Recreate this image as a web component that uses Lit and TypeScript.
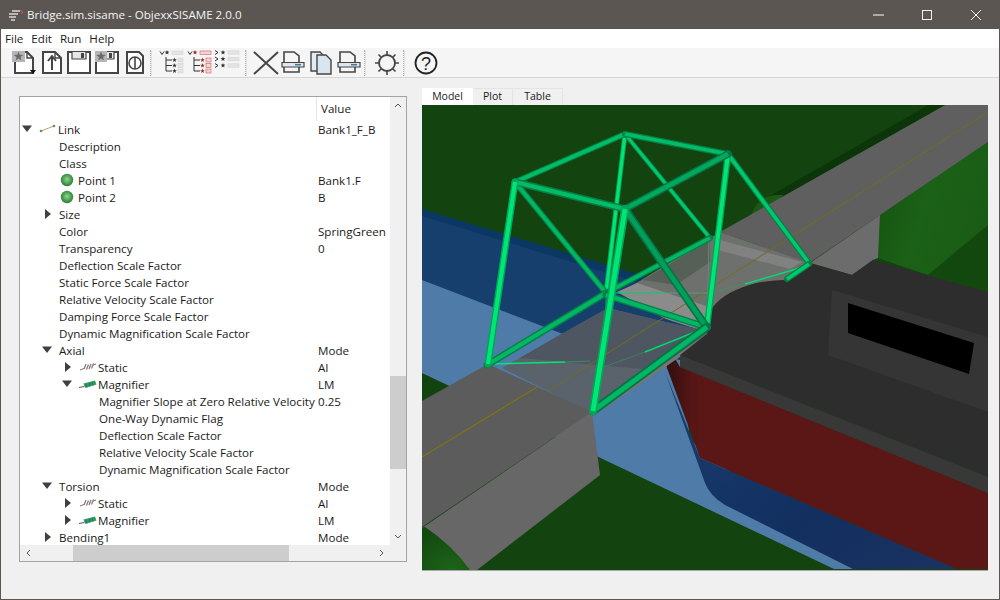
import { LitElement, html, css, svg } from "lit";
import { customElement } from "lit/decorators.js";

type Row = { l: number; a?: "r" | "d"; i?: "link" | "pt" | "st" | "mg"; n: string; v?: string };

const ROWS: Row[] = [
  { l: 0, a: "d", i: "link", n: "Link", v: "Bank1_F_B" },
  { l: 1, n: "Description" },
  { l: 1, n: "Class" },
  { l: 1, i: "pt", n: "Point 1", v: "Bank1.F" },
  { l: 1, i: "pt", n: "Point 2", v: "B" },
  { l: 1, a: "r", n: "Size" },
  { l: 1, n: "Color", v: "SpringGreen" },
  { l: 1, n: "Transparency", v: "0" },
  { l: 1, n: "Deflection Scale Factor" },
  { l: 1, n: "Static Force Scale Factor" },
  { l: 1, n: "Relative Velocity Scale Factor" },
  { l: 1, n: "Damping Force Scale Factor" },
  { l: 1, n: "Dynamic Magnification Scale Factor" },
  { l: 1, a: "d", n: "Axial", v: "Mode" },
  { l: 2, a: "r", i: "st", n: "Static", v: "AI" },
  { l: 2, a: "d", i: "mg", n: "Magnifier", v: "LM" },
  { l: 3, n: "Magnifier Slope at Zero Relative Velocity", v: "0.25" },
  { l: 3, n: "One-Way Dynamic Flag" },
  { l: 3, n: "Deflection Scale Factor" },
  { l: 3, n: "Relative Velocity Scale Factor" },
  { l: 3, n: "Dynamic Magnification Scale Factor" },
  { l: 1, a: "d", n: "Torsion", v: "Mode" },
  { l: 2, a: "r", i: "st", n: "Static", v: "AI" },
  { l: 2, a: "r", i: "mg", n: "Magnifier", v: "LM" },
  { l: 1, a: "r", n: "Bending1", v: "Mode" },
];

const star = (x: number, y: number, r: number, fill: string) => {
  const pts: string[] = [];
  for (let k = 0; k < 10; k++) {
    const rad = k % 2 ? r * 0.42 : r;
    const t = -Math.PI / 2 + (k * Math.PI) / 5;
    pts.push(`${(x + rad * Math.cos(t)).toFixed(1)},${(y + rad * Math.sin(t)).toFixed(1)}`);
  }
  return svg`<polygon points=${pts.join(" ")} fill=${fill}/>`;
};

const D = "#454545";
const ICONS = [
  svg`<path d="M5 3H17L23 9V24H5Z" fill="#fff" stroke=${D} stroke-width="2"/><path d="M17 3V9H23" fill="none" stroke=${D} stroke-width="1.4"/><rect x="2" y="2" width="13" height="11" fill="#b5b5b5"/>${star(8.5, 7.5, 5, "#6a6a6a")}<path d="M20 21h6l-3 4z" fill="#111"/>`,
  svg`<path d="M5 3H17L23 9V24H5Z" fill="#fff" stroke=${D} stroke-width="2"/><path d="M17 3V9H23" fill="none" stroke=${D} stroke-width="1.4"/><path d="M14 21V8M10 12l4-5 4 5" fill="none" stroke=${D} stroke-width="2"/>`,
  svg`<path d="M2 3H24V24H2Z" fill="#fff" stroke=${D} stroke-width="2"/><path d="M6 3V10H20V3" fill="#e6e6e6" stroke=${D} stroke-width="1.2"/><rect x="15" y="4" width="3" height="5" fill=${D}/>`,
  svg`<path d="M2 3H24V24H2Z" fill="#fff" stroke=${D} stroke-width="2"/><path d="M6 3V10H20V3" fill="#e6e6e6" stroke=${D} stroke-width="1.2"/><rect x="15" y="4" width="3" height="5" fill=${D}/><rect x="1" y="2" width="12" height="11" fill="#b5b5b5"/>${star(7, 7.5, 5, "#6a6a6a")}`,
  svg`<path d="M5 3H17L21 7V24H5Z" fill="#fff" stroke=${D} stroke-width="2"/><circle cx="13" cy="14" r="6" fill="none" stroke=${D} stroke-width="1.6"/><path d="M13 8V20" stroke=${D} stroke-width="1.6"/>`,
];

const chevV = (x: number, y: number, c: string) => svg`<path d="M${x} ${y - 1.5}l2 3 2-3" fill="none" stroke=${c} stroke-width="1"/>`;
const chevR = (x: number, y: number, c: string) => svg`<path d="M${x} ${y - 2}l3 2-3 2" fill="none" stroke=${c} stroke-width="1"/>`;

const treeIcon = (sc: string, bf: string, bs: string) => svg`
  ${chevV(2, 4, "#333")}${star(9, 3.5, 2.6, sc)}<rect x="14" y="2" width="11" height="3.4" fill=${bf} stroke=${bs} stroke-width=".6"/>
  <path d="M8 8V22M8 11H14M8 16.500H14M8 22H14" fill="none" stroke="#333" stroke-width="1"/>
  ${[11, 16.5, 22].map((y) => svg`${star(16.5, y, 2.4, sc)}<rect x="20" y=${y - 2} width="5" height="4" fill=${bf} stroke=${bs} stroke-width=".6"/>`)}`;

const tagIcon = svg`<path d="M4 13V3H14L19 7V13" fill="none" stroke=${D} stroke-width="1.6"/><path d="M4 18V23H19V18" fill="none" stroke=${D} stroke-width="1.6"/><path d="M2 13.500H24V18H2Z" fill="#dfe8f0" stroke=${D} stroke-width="1.2"/><path d="M15 15.700h6" stroke="#3b7b9c" stroke-width="1.6"/>`;

const GROUP2 = [
  treeIcon("#333", "#e4e4e4", "#d2d2d2"),
  treeIcon("#a02a2a", "#f6d4d4", "#c86060"),
  svg`${[3.5, 10, 16.5].map((y) => svg`${chevR(1, y, "#333")}${star(9, y, 2.6, "#333")}<rect x="14" y=${y - 1.7} width="11" height="3.4" fill="#e4e4e4" stroke="#d2d2d2" stroke-width=".6"/>`)}`,
];

const GROUP3 = [
  svg`<path d="M2 3L26 25M26 3L2 25" stroke=${D} stroke-width="2" fill="none"/>`,
  tagIcon,
  svg`<path d="M3 3H12L15 6V22H3Z" fill="#e4ecf3" stroke=${D} stroke-width="1.4"/><path d="M9 6H18L23 11V25H9Z" fill="#d9e5ef" stroke=${D} stroke-width="1.4"/>`,
  tagIcon,
];

const SUN = svg`<circle cx="14" cy="14" r="8" fill="none" stroke=${D} stroke-width="1.8"/><path d="M14 2V6M14 22V26M2 14H6M22 14H26M5.500 5.500L8 8M20 20L22.500 22.500M5.500 22.500L8 20M20 8L22.500 5.500" stroke=${D} stroke-width="1.6"/>`;
const HELP = svg`<circle cx="14" cy="14" r="10.500" fill="none" stroke="#222" stroke-width="1.8"/><text x="14" y="20.500" text-anchor="middle" font-family="Liberation Sans, sans-serif" font-size="18" fill="#222">?</text>`;

const tb = (c: unknown) => html`<svg class="tb" viewBox="0 0 28 28">${c}</svg>`;

// Strut: x1,y1,x2,y2,width,edge colour,core colour
type S = [number, number, number, number, number, string, string];
const BR = ["#00a558", "#00e676"];
const MD = ["#067f49", "#00b763"];
const STRUTS: S[] = [
  [625, 134, 606, 293, 5, BR[0], BR[1]],
  [625, 134, 710, 238, 5, MD[0], "#00c86c"],
  [606, 293, 710, 238, 6, MD[0], MD[1]],
  [515, 182, 606, 293, 6, MD[0], MD[1]],
  [728, 154, 809, 263, 6, MD[0], "#00c86c"],
  [809, 264, 787, 279, 6, MD[0], "#00c86c"],
  [728, 154, 707, 327, 6.5, BR[0], BR[1]],
  [487, 365, 606, 293, 7, MD[0], MD[1]],
  [606, 295, 706, 327, 7, MD[0], MD[1]],
  [515, 182, 625, 134, 6, MD[0], "#00bd66"],
  [625, 134, 728, 154, 6, MD[0], "#00bd66"],
  [625, 209, 728, 154, 7.5, "#067447", "#00a95b"],
  [515, 182, 625, 209, 7, MD[0], "#00bd66"],
  [625, 209, 705, 325, 8, "#067447", "#00a05a"],
  [593, 411, 707, 327, 8.5, "#067447", MD[1]],
  [515, 182, 488, 364, 7, BR[0], BR[1]],
  [625, 209, 593, 411, 8, BR[0], BR[1]],
];

const poly = (p: string, f: string) => svg`<polygon points=${p} fill=${f}/>`;

const SCENE = svg`
  <defs>
    <linearGradient id="hullr" gradientUnits="userSpaceOnUse" x1="665" x2="702" y1="0" y2="0"><stop offset="0" stop-color="#2f0f0e"/><stop offset=".7" stop-color="#551615"/><stop offset="1" stop-color="#5a1716"/></linearGradient>
    <linearGradient id="grn" x1="0" x2="1" y1="0" y2=".4"><stop offset="0" stop-color="#14510f"/><stop offset=".5" stop-color="#1c6118"/><stop offset="1" stop-color="#1a5c15"/></linearGradient>
    <radialGradient id="corner" cx=".6" cy="1" r="1"><stop offset="0" stop-color="#1d641a"/><stop offset="1" stop-color="#12490f"/></radialGradient>
    <linearGradient id="hullb" x1="0" x2="1" y1="0" y2="1"><stop offset="0" stop-color="#1a3f70"/><stop offset=".6" stop-color="#122f60"/><stop offset="1" stop-color="#1a3260"/></linearGradient>
  </defs>
  <rect x="422" y="105" width="566" height="465" fill="#13440f"/>
  ${poly("947,104 930,104 770,196 770,204", "#0c350a")}
  <path d="M752 213 Q758 200 767 197 Q776 194 784 195 L745 225Z" fill="#1a5a15"/>
  ${poly("422,209 650,278 720,300 640,400 422,340", "#0b3765")}
  ${poly("422,216 640,283 720,315 640,400 422,340", "#173f6e")}
  ${poly("422,280 563,334 680,360 690,440 853,569 834,569 422,373", "#4f7ba8")}
  <path d="M665 372 L705 483 Q710 496 725 505 L853 569 H957 L700 458Z" fill="url(#hullb)"/>
  <path d="M667 368 Q665 360 673 355 L680 367 L988 493 V569 H957 L700 458Z" fill="url(#hullr)"/>
  <path d="M422 530 L425 527 Q455 545 472 570 H422Z" fill="url(#corner)"/>
  ${poly("880,215 988,142 988,292 928,275 878,258", "url(#grn)")}
  ${poly("928,275 988,225 988,292", "#12480e")}
  ${poly("947,104 988,104 988,142 880,215 809,263 720,232", "#5f5f5f")}
  ${poly("880,215 878,258 873,260 852,275 810,263", "#6c6c6c")}
  ${poly("620,293 720,232 810,263 787,280 757,283 730,293 713,307 708,330 700,332", "#6d706c")}
  ${poly("643,280 710,240 710,262 676,285", "#566056")}
  ${poly("720,240 802,262 790,269 718,250", "#818181")}
  ${poly("617,292 637,283 712,308 708,330 698,328 680,327", "#8b8b8b")}
  ${poly("613,302 697,329 660,323 610,310", "#173f6e")}
  ${poly("502,368 608,308 657,320 706,331 709,336 593,414", "#5a626c")}
  ${poly("520,358 563,333 608,308 657,320 706,331 680,352 653,370", "#4e5662")}
  <path d="M592 414 L598 413 L709 337 L708 333Z" fill="#767676"/>
  <path d="M810 263 L852 275 L873 260 L988 292 V477 L680 355 L708 333 V323 Q709 314 713 307 Q720 298 730 293 Q743 286 757 283 Q772 280 787 280Z" fill="#2d2d2d"/>
  ${poly("680,355 988,477 988,493 680,367", "#383838")}
  ${poly("832,290 988,337 988,412 828,355", "#353535")}
  ${poly("848,303 974,343 969,374 848,333", "#000000")}
  <line x1="548" y1="391" x2="988" y2="112" stroke="#736e1a" stroke-width="1"/>
  ${poly("422,401 488,364 592,412 422,527", "#5c5c5c")}
  <path d="M422 528 L592 412 L600 475 L477 570 H470 Q452 545 425 527Z" fill="#676767"/>
  <line x1="422" y1="457" x2="537" y2="387" stroke="#7c7410" stroke-width="1.2"/>
  <path d="M490 364 L565 362" stroke="#00e676" stroke-width="1.4"/><path d="M565 362 L590 361" stroke="#3e8a66" stroke-width="1"/>
  <path d="M610 293 L665 293" stroke="#00d070" stroke-width="1.2"/><path d="M665 293 L708 293" stroke="#5a9a7a" stroke-width="1"/>
  <path d="M803 267 L745 284" stroke="#00dd72" stroke-width="1.4"/><path d="M745 284 L715 292" stroke="#4a8a6a" stroke-width="1"/>
  <path d="M700 330 L645 352" stroke="#00d870" stroke-width="1.4"/><path d="M645 352 L590 372" stroke="#3f7f60" stroke-width="1"/>
  <path d="M606 295 V330" stroke="#3b8a72" stroke-width="1"/><path d="M709 240 L707 320" stroke="#6a8a7a" stroke-width="1"/>
  ${STRUTS.map(([a, b, c, d, w, e, f]) => svg`<line x1=${a} y1=${b} x2=${c} y2=${d} stroke=${e} stroke-width=${w} stroke-linecap="round"/><line x1=${a} y1=${b} x2=${c} y2=${d} stroke=${f} stroke-width=${w * 0.6}/>`)}
`;

const ARROW_D = html`<svg class="arr" viewBox="0 0 12 10"><path d="M0 1.500H10L5 8Z" fill="#404040"/></svg>`;
const ARROW_R = html`<svg class="arr" viewBox="0 0 12 10"><path d="M3 0V10L9 5Z" fill="#404040"/></svg>`;

const rowIcon = (k?: string) => {
  if (!k) return "";
  if (k === "link")
    return html`<svg class="ic" viewBox="0 0 20 12"><path d="M3 8L16 3" stroke="#c79c78" stroke-width="1"/><circle cx="3" cy="8" r="1.300" fill="#4f9a68"/><circle cx="16" cy="3" r="1.300" fill="#4f9a68"/></svg>`;
  if (k === "pt")
    return html`<svg class="ic" viewBox="0 0 20 14"><defs><radialGradient id="ball" cx=".5" cy=".45" r=".55"><stop offset="0" stop-color="#9ad09a"/><stop offset=".6" stop-color="#4aa34f"/><stop offset="1" stop-color="#2c7a35"/></radialGradient></defs><circle cx="9" cy="7" r="6.200" fill="url(#ball)"/></svg>`;
  if (k === "st")
    return html`<svg class="ic" viewBox="0 0 20 12"><path d="M2 9L6 7.500" stroke="#8a6a6a"/><path d="M6 8L8 3M8.500 8.500L10.500 3.500M11 8L13 3M13.500 7.500L15.500 2.500" stroke="#8d7b80" stroke-width="1.300"/><path d="M15 4L18 3" stroke="#8a6a6a"/></svg>`;
  return html`<svg class="ic" viewBox="0 0 20 12"><path d="M1 9.500L6 8.500" stroke="#555"/><path d="M5.500 5.500L17 2.500L18.500 6.500L7 10Z" fill="#2f9a63"/><path d="M8 6L9 9.500M11 5L12 8.500M14 4L15 7.500" stroke="#1f6e46" stroke-width=".8"/></svg>`;
};

@customElement("app-root")
export class AppRoot extends LitElement {
  static styles = css`
    :host { display: block; width: 1000px; height: 600px; }
    * { box-sizing: border-box; }
    .win { width: 1000px; height: 600px; display: flex; flex-direction: column; background: #f0f0f0;
      border: 1px solid #5b5651; border-top: 0; font-family: "Open Sans", "Noto Sans", sans-serif; font-size: 11.6px; color: #1a1a1a; overflow: hidden; }
    .title { height: 29px; flex: none; background: #5b5651; color: #f4f4f4; display: flex; align-items: center; padding-left: 7px; gap: 3px; font-size: 11.6px; }
    .title .logo { width: 16px; height: 12px; flex: none; }
    .title .t { flex: 1; white-space: nowrap; }
    .wc { width: 46px; height: 29px; display: flex; align-items: center; justify-content: center; flex: none; }
    .wc svg { width: 12px; height: 12px; }
    .menu { height: 19px; flex: none; background: #fff; display: flex; align-items: center; padding-left: 4px; gap: 8px; font-size: 11.6px; }
    .toolbar { height: 30px; flex: none; background: #f5f5f5; border-bottom: 1px solid #d6d6d6; display: flex; align-items: center; padding-left: 9px; }
    .tb { width: 28px; height: 28px; flex: none; display: block; }
    .sep { width: 2px; height: 26px; flex: none; border-left: 1px dotted #b4b4b4; border-right: 1px solid #e2e2e2; margin-right: 6px; }
    .sep.b { margin-left: 3px; margin-right: 5px; }
    .sep.c { margin-right: 7px; }
    .sep.d { margin-left: 2px; margin-right: 7px; }
    .main { flex: 1; min-height: 0; display: flex; padding: 10px 11px 0 18px; gap: 15px; align-items: flex-start; }
    .tree { width: 388px; height: 466px; margin-top: 8px; flex: none; border: 1px solid #a3a3a3; background: #f0f0f0;
      display: grid; grid-template-columns: 370px 16px; grid-template-rows: 448px 16px; }
    .view { background: #fff; overflow: hidden; }
    .hdr { height: 23.500px; display: grid; grid-template-columns: 296px 1fr; }
    .hdr .v { border-left: 1px solid #e5e5e5; padding: 3px 0 0 4px; line-height: 17px; }
    .row { height: 17px; line-height: 17px; display: grid; grid-template-columns: 296px 1fr; white-space: nowrap; }
    .name { display: flex; align-items: center; min-width: 0; }
    .slot { width: 14px; flex: none; display: flex; align-items: center; }
    .txt { margin-left: 3px; }
    .val { padding-left: 2px; }
    .arr { width: 12px; height: 10px; display: block; }
    .ic { width: 20px; height: 14px; flex: none; display: block; margin-left: 2px; margin-right: -3px; }
    .vbar, .hbar { background: #f0f0f0; }
    .vbar { display: flex; flex-direction: column; }
    .hbar { display: flex; }
    .sb { flex: none; width: 16px; height: 16px; display: block; }
    .vtrack { flex: 1; padding-top: 263px; }
    .vthumb { height: 93px; background: #cdcdcd; }
    .htrack { flex: 1; padding-left: 37px; }
    .hthumb { width: 216px; height: 16px; background: #cdcdcd; }
    .right { width: 566px; flex: none; display: flex; flex-direction: column; }
    .tabs { height: 17px; display: flex; line-height: 15px; }
    .tab { height: 17px; border: 1px solid #e4e4e4; border-bottom: 0; border-left: 0; background: #f0f0f0; font-size: 10.5px; display: flex; align-items: center; justify-content: center; padding-bottom: 1px; }
    .tab.on { background: #fff; border: 0; }
    .w1 { width: 51px; } .w2 { width: 40px; } .w3 { width: 50px; }
    .scene { display: block; width: 566px; height: 465px; }
    .edge { height: 1px; background: #a8a8a8; }
  `;

  render() {
    return html`<div class="win">
      <div class="title">
        <svg class="logo" viewBox="0 0 16 12"><path d="M4 2H12M1 5H10M1 8H8M3 11H7" stroke="#d8d8d8" stroke-width="1.400"/><path d="M12 1L15 3L13 5" fill="none" stroke="#e05050" stroke-width="1"/></svg>
        <div class="t">Bridge.sim.sisame - ObjexxSISAME 2.0.0</div>
        <div class="wc"><svg viewBox="0 0 12 12"><path d="M1 6H12" stroke="#fff"/></svg></div>
        <div class="wc"><svg viewBox="0 0 12 12"><rect x="1.500" y="1.500" width="9" height="9" fill="none" stroke="#f0f0f0"/></svg></div>
        <div class="wc"><svg viewBox="0 0 12 12"><path d="M1 1L11 11M11 1L1 11" stroke="#fff"/></svg></div>
      </div>
      <div class="menu"><span>File</span><span>Edit</span><span>Run</span><span>Help</span></div>
      <div class="toolbar">
        ${ICONS.map(tb)}
        <div class="sep"></div>
        ${GROUP2.map(tb)}
        <div class="sep b"></div>
        ${GROUP3.map(tb)}
        <div class="sep c"></div>
        ${tb(SUN)}
        <div class="sep d"></div>
        ${tb(HELP)}
      </div>
      <div class="main">
        <div class="tree">
          <div class="view">
            <div class="hdr"><div></div><div class="v">Value</div></div>
            ${ROWS.map(
              (r) => html`<div class="row">
                <div class="name" style="padding-left:${2 + r.l * 20}px">
                  <span class="slot">${r.a === "d" ? ARROW_D : r.a === "r" ? ARROW_R : ""}</span>
                  ${rowIcon(r.i)}
                  <span class="txt">${r.n}</span>
                </div>
                <div class="val">${r.v ?? ""}</div>
              </div>`
            )}
          </div>
          <div class="vbar">
            <svg class="sb" viewBox="0 0 16 16"><path d="M5 10L8 7L11 10" fill="none" stroke="#555"/></svg>
            <div class="vtrack"><div class="vthumb"></div></div>
            <svg class="sb" viewBox="0 0 16 16"><path d="M5 6L8 9L11 6" fill="none" stroke="#555"/></svg>
          </div>
          <div class="hbar">
            <svg class="sb" viewBox="0 0 16 16"><path d="M10 5L7 8L10 11" fill="none" stroke="#555"/></svg>
            <div class="htrack"><div class="hthumb"></div></div>
            <svg class="sb" viewBox="0 0 16 16"><path d="M6 5L9 8L6 11" fill="none" stroke="#555"/></svg>
          </div>
          <div></div>
        </div>
        <div class="right">
          <div class="tabs">
            <div class="tab on w1">Model</div><div class="tab w2">Plot</div><div class="tab w3">Table</div>
          </div>
          <svg class="scene" viewBox="422 105 566 465">${SCENE}</svg>
          <div class="edge"></div>
        </div>
      </div>
    </div>`;
  }
}
